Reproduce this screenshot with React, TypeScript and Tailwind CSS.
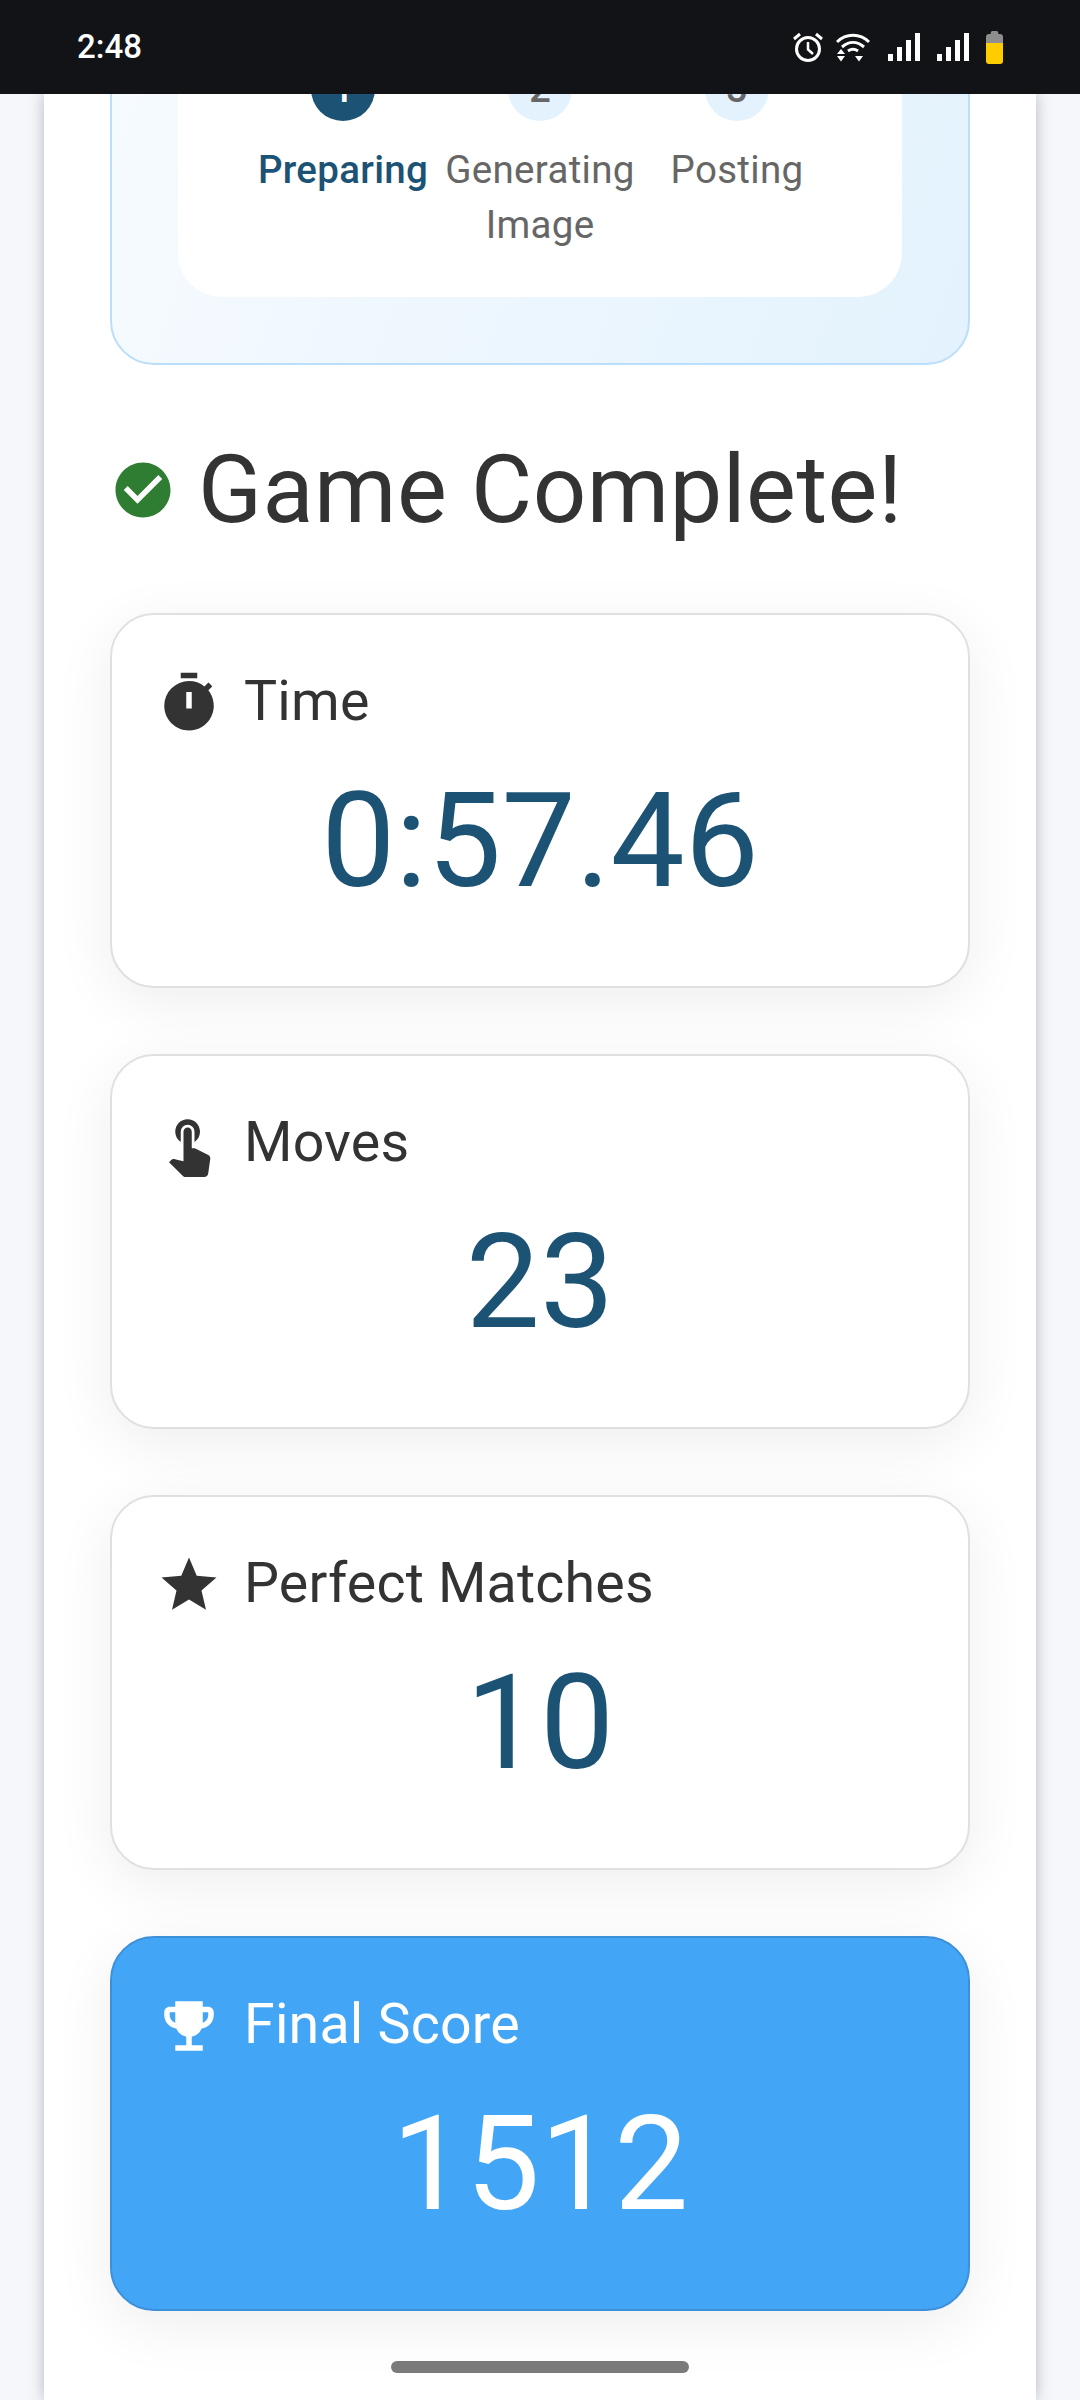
import type { ReactNode } from "react";
import { MdCheckCircle, MdEmojiEvents, MdStar, MdTimer, MdTouchApp } from "react-icons/md";

const STEPS = [
  { n: 1, label: "Preparing", active: true },
  { n: 2, label: "Generating Image", active: false },
  { n: 3, label: "Posting", active: false },
];

function StatusIcons() {
  return (
    <div className="flex items-center">
      {/* alarm */}
      <svg width="32" height="30" viewBox="0 0 32 30" className="mr-[12px]" fill="none" stroke="#fff" strokeWidth="3">
        <circle cx="16" cy="17" r="11.5" />
        <path d="M16 10v7.5l5 4.5" strokeWidth="2.5" />
        <path d="M2 7l6-5M30 7l-6-5" />
      </svg>
      {/* wifi with up and down arrows */}
      <svg width="34" height="30" viewBox="0 0 34 30" className="mr-[18px]" fill="none" stroke="#fff" strokeWidth="3">
        <path d="M1 10C10 1 24 1 33 10" />
        <path d="M6 15C13 9 21 9 28 15" />
        <path d="M12 19c3-2 7-2 10 0" />
        <path d="M1 22h8l-4-5zM1 24h8l-4 5.5zM19 24h8l-4 5.5z" fill="#fff" stroke="none" />
      </svg>
      {/* two signal meters */}
      {[0, 1].map((i) => (
        <svg key={i} width="32" height="28" viewBox="0 0 32 28" className="mr-[17px]" fill="#fff">
          <rect x="0" y="21" width="5" height="7" />
          <rect x="9" y="14" width="5" height="14" />
          <rect x="18" y="7" width="5" height="21" />
          <rect x="27" y="0" width="5" height="28" />
        </svg>
      ))}
      {/* battery */}
      <svg width="17" height="33" viewBox="0 0 17 33" className="mr-[-1px]">
        <path d="M5 3a2 2 0 0 1 2-3h3a2 2 0 0 1 2 3h2a3 3 0 0 1 3 3v6H0V6a3 3 0 0 1 3-3z" fill="#8e8e8e" />
        <path d="M0 12h17v18a3 3 0 0 1-3 3H3a3 3 0 0 1-3-3z" fill="#ffcc00" />
      </svg>
    </div>
  );
}

function StatCard({
  icon,
  label,
  value,
  highlight = false,
}: {
  icon: ReactNode;
  label: string;
  value: string;
  highlight?: boolean;
}) {
  return (
    <div
      className={`h-[375px] rounded-[44px] border-[2px] px-[44px] pt-[45px] shadow-[0_14px_60px_rgba(0,0,0,0.07)] ${
        highlight ? "border-[#3d8fd9] bg-[#42a5f5] text-white" : "border-[#e0e0e0] bg-white text-[#333333]"
      }`}
    >
      <div className="flex h-[84px] items-center gap-[22px]">
        <span className="mt-[1px] shrink-0">{icon}</span>
        <span className="text-[55.5px] leading-[84px] tracking-[0.2px]">{label}</span>
      </div>
      <div className={`mt-[20px] text-center text-[132px] leading-[154px] ${highlight ? "text-white" : "text-[#1c5375]"}`}>
        {value}
      </div>
    </div>
  );
}

export default function App() {
  return (
    <div className="flex h-[2400px] w-[1080px] flex-col overflow-hidden bg-[#f5f7fa] font-['Roboto',sans-serif]">
      <header className="z-10 flex h-[94px] shrink-0 items-center justify-between bg-[#111317] pl-[77px] pr-[78px]">
        <span className="text-[33px] font-medium text-white">2:48</span>
        <StatusIcons />
      </header>

      <main className="relative mx-[44px] flex-1 bg-white px-[66px] shadow-[0_0_14px_rgba(60,70,90,0.35)]">
        {/* share progress box, scrolled partly out of view */}
        <section className="mt-[-100px] h-[371px] rounded-[44px] border-[2px] border-[#bbdefb] bg-linear-[110deg] from-[#f7fbff] to-[#e3f2fd] px-[66px]">
          <div className="h-[301px] rounded-[44px] bg-white">
            <div className="flex justify-center pt-[61px]">
              {STEPS.map((s) => (
                <div key={s.n} className="flex w-[197px] flex-col items-center">
                  <div
                    className={`flex h-[64px] w-[64px] items-center justify-center rounded-full text-[38px] font-medium ${
                      s.active ? "bg-[#1c5375] text-white" : "bg-[#e3f2fd] text-[#666666]"
                    }`}
                  >
                    {s.n}
                  </div>
                  <div
                    className={`mt-[21px] text-center text-[38.5px] leading-[55px] tracking-[0.3px] ${
                      s.active ? "font-medium text-[#1c5375]" : "text-[#666666]"
                    }`}
                  >
                    {s.label}
                  </div>
                </div>
              ))}
            </div>
          </div>
        </section>

        <h2 className="mt-[61px] mb-[59px] flex h-[128px] items-center gap-[22px] text-[94px] font-normal leading-[128px] tracking-[0.45px] text-[#333333]">
          <MdCheckCircle size={66} className="shrink-0 text-[#2e7d32]" />
          Game Complete!
        </h2>

        <div className="flex flex-col gap-[66px]">
          <StatCard icon={<MdTimer size={66} />} label="Time" value="0:57.46" />
          <StatCard icon={<MdTouchApp size={66} />} label="Moves" value="23" />
          <StatCard icon={<MdStar size={66} />} label="Perfect Matches" value="10" />
          <StatCard icon={<MdEmojiEvents size={66} />} label="Final Score" value="1512" highlight />
        </div>
      </main>

      {/* gesture pill */}
      <div className="absolute left-[391px] top-[2361px] h-[12px] w-[298px] rounded-full bg-[#7a7a7a]" />
    </div>
  );
}
